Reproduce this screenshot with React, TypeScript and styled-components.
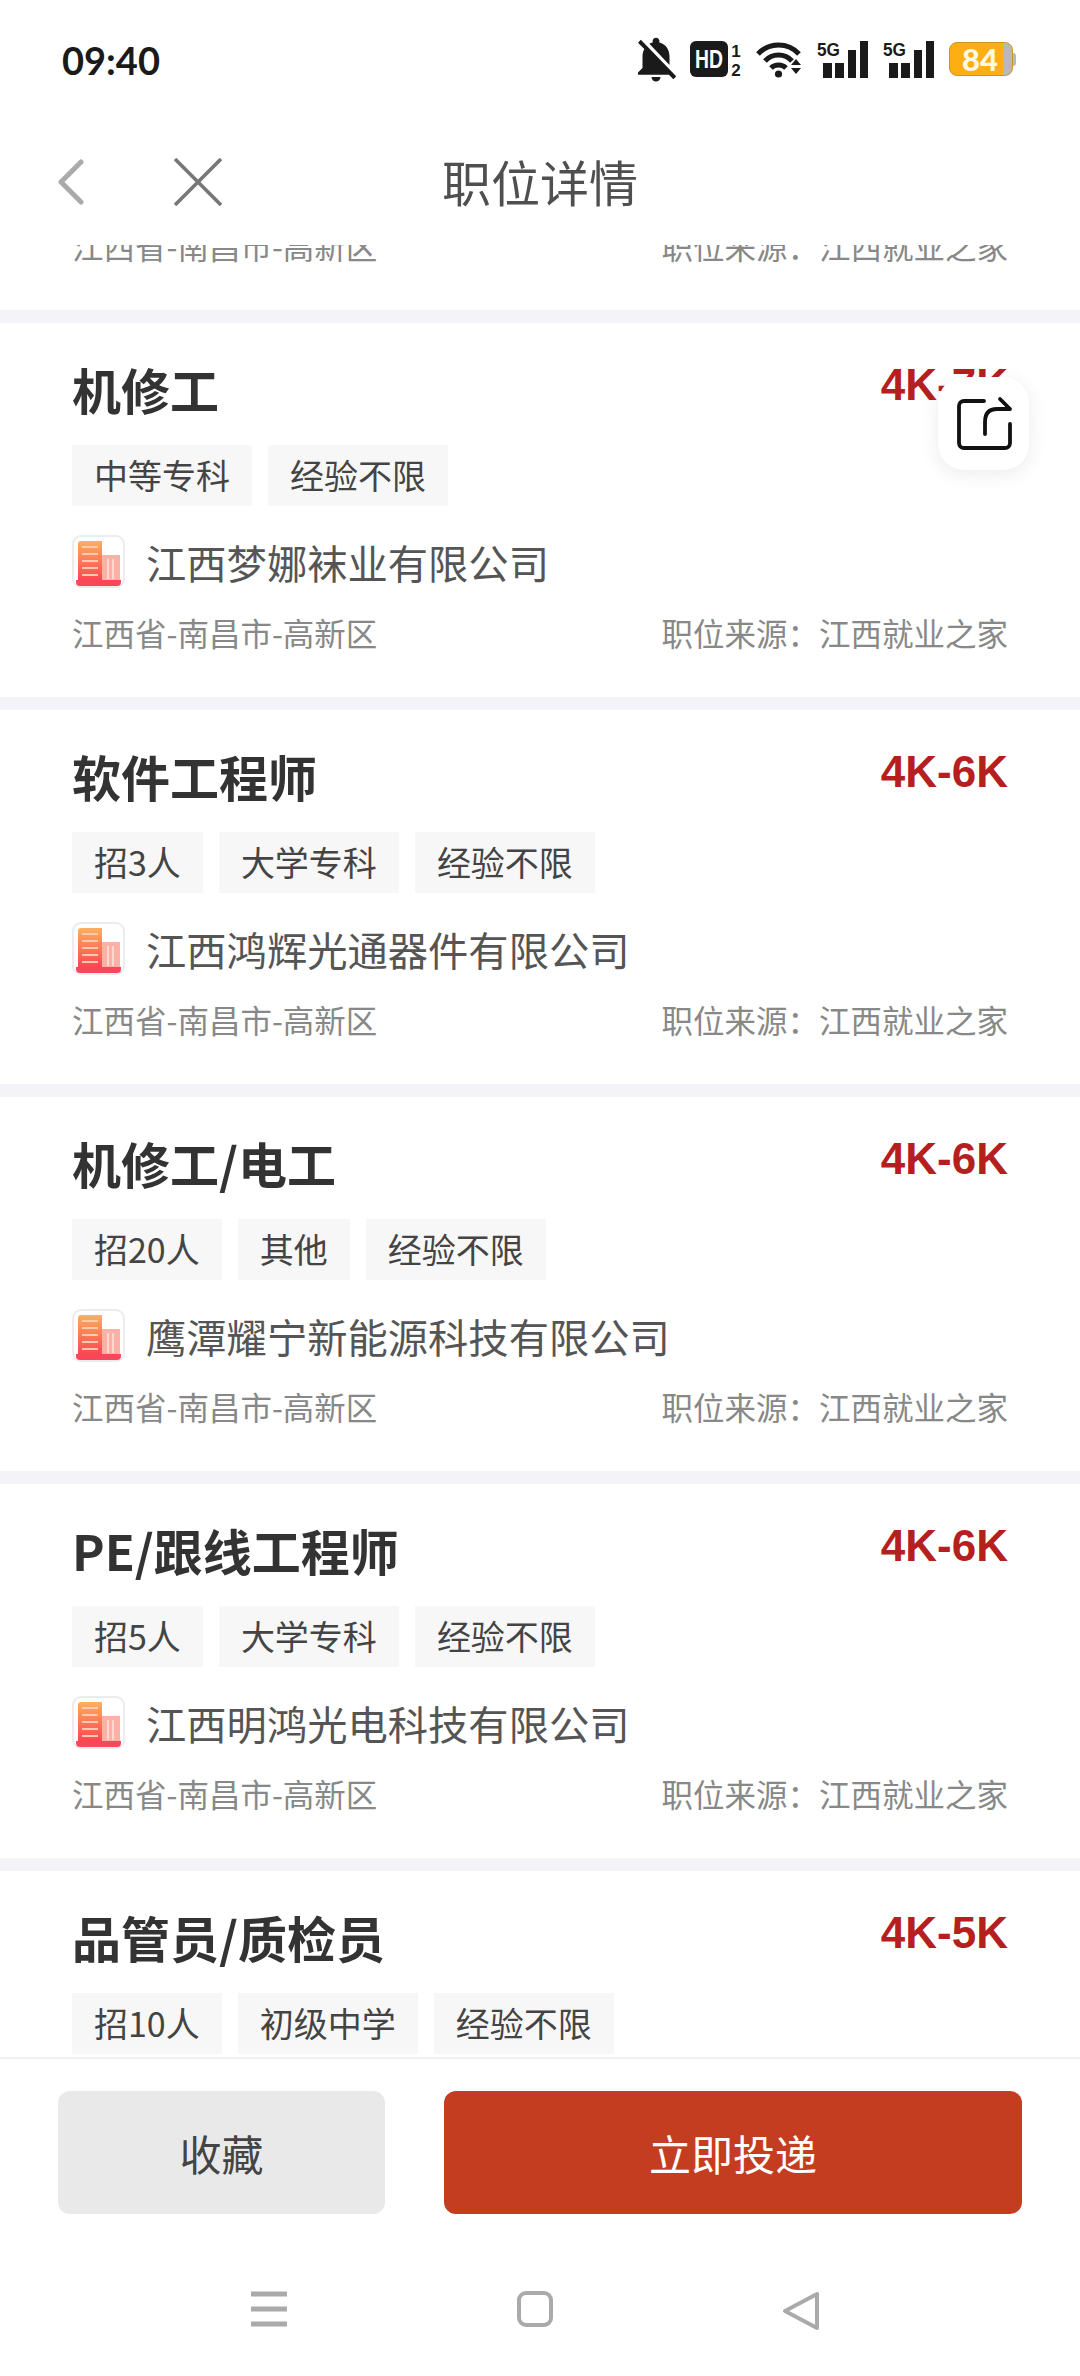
import React from 'react';
import styled, { createGlobalStyle } from 'styled-components';
import { MdNotificationsOff } from 'react-icons/md';

interface jobType {
  title: string;
  salary: string;
  tags: string[];
  company: string;
}

const jobs: jobType[] = [
  { title: '机修工', salary: '4K-7K', tags: ['中等专科', '经验不限'], company: '江西梦娜袜业有限公司' },
  { title: '软件工程师', salary: '4K-6K', tags: ['招3人', '大学专科', '经验不限'], company: '江西鸿辉光通器件有限公司' },
  { title: '机修工/电工', salary: '4K-6K', tags: ['招20人', '其他', '经验不限'], company: '鹰潭耀宁新能源科技有限公司' },
  { title: 'PE/跟线工程师', salary: '4K-6K', tags: ['招5人', '大学专科', '经验不限'], company: '江西明鸿光电科技有限公司' },
  { title: '品管员/质检员', salary: '4K-5K', tags: ['招10人', '初级中学', '经验不限'], company: '江西鸿辉光通器件有限公司' },
];

const Signal = () => (
  <svg width="51" height="37" viewBox="0 0 51 37">
    <text x="0" y="15" fontFamily="'Liberation Sans', sans-serif" fontWeight="700" fontSize="19" textLength="23" lengthAdjust="spacingAndGlyphs" fill="#1a1a1a">
      5G
    </text>
    <rect x="6" y="22" width="9" height="15" fill="#1a1a1a" />
    <rect x="18" y="22" width="9" height="15" fill="#1a1a1a" />
    <rect x="31" y="9" width="8" height="28" fill="#1a1a1a" />
    <rect x="43" y="0" width="8" height="37" fill="#1a1a1a" />
  </svg>
);

const Wifi = () => (
  <svg width="46" height="37" viewBox="0 0 46 37">
    <g fill="none" stroke="#1a1a1a" strokeWidth="5">
      <path d="M2 13 C13 1 32 1 43 13" />
      <path d="M9 20 C16 12 29 12 36 20" />
      <path d="M15 27 C19 23 26 23 30 27" />
    </g>
    <circle cx="22.5" cy="33" r="3.6" fill="#1a1a1a" />
    <path d="M35 24 L40 18 L45 24 Z M35 27 L45 27 L40 33 Z" fill="#1a1a1a" />
  </svg>
);

const HdBadge = () => (
  <svg width="51" height="36" viewBox="0 0 51 36">
    <rect width="38" height="36" rx="6" fill="#1a1a1a" />
    <text x="19" y="27" textAnchor="middle" fontFamily="'Liberation Sans', sans-serif" fontWeight="700" fontSize="26" textLength="28" lengthAdjust="spacingAndGlyphs" fill="#fff">
      HD
    </text>
    <text x="46" y="16" textAnchor="middle" fontFamily="'Liberation Sans', sans-serif" fontWeight="700" fontSize="17" fill="#1a1a1a">
      1
    </text>
    <text x="46" y="35" textAnchor="middle" fontFamily="'Liberation Sans', sans-serif" fontWeight="700" fontSize="17" fill="#1a1a1a">
      2
    </text>
  </svg>
);

const BuildingIcon = () => (
  <svg width="53" height="53" viewBox="0 0 53 53">
    <defs>
      <linearGradient id="tower" x1="0" y1="0" x2="0" y2="1">
        <stop offset="0" stopColor="#fbb060" />
        <stop offset="1" stopColor="#fb3f4f" />
      </linearGradient>
    </defs>
    <rect x="1" y="1" width="51" height="51" rx="8" fill="#fff" stroke="#ececec" strokeWidth="2" />
    <path d="M6 9 a3 3 0 0 1 3 -3 H30 V48 H6 Z" fill="url(#tower)" />
    <rect x="30" y="20" width="18" height="28" fill="#fcb0a6" />
    <path d="M4 45 H49 V47 a4 4 0 0 1 -4 4 H8 a4 4 0 0 1 -4 -4 Z" fill="#f8465a" />
    <g stroke="#ffc9b0" strokeWidth="2">
      <path d="M10 12 H26 M10 19 H26 M10 26 H26 M10 33 H26 M10 40 H26" />
    </g>
    <g stroke="#ffd8d0" strokeWidth="2">
      <path d="M36 24 V44 M41 24 V44" />
    </g>
  </svg>
);

const App = () => {
  return (
    <Page>
      <GlobalStyle />
      <StatusBar>
        <Clock>09:40</Clock>
        <StatusIcons>
          <BellWrap>
            <MdNotificationsOff size={54} color="#1a1a1a" style={{ flexShrink: 0 }} />
          </BellWrap>
          <HdBadge />
          <Wifi />
          <Signal />
          <Signal />
          <Battery>
            <BatteryText>84</BatteryText>
          </Battery>
        </StatusIcons>
      </StatusBar>

      <NavBar>
        <NavIcons>
          <svg width="26" height="46" viewBox="0 0 26 46">
            <path d="M23 3 L3 23 L23 43" fill="none" stroke="#aaaaaa" strokeWidth="5" strokeLinecap="round" strokeLinejoin="round" />
          </svg>
          <svg width="48" height="48" viewBox="0 0 48 48">
            <path d="M1 1 L47 47 M47 1 L1 47" fill="none" stroke="#777777" strokeWidth="3.6" />
          </svg>
        </NavIcons>
        <NavTitle>职位详情</NavTitle>
      </NavBar>

      <List>
        <PeekCard>
          <MetaRow>
            <span>江西省-南昌市-高新区</span>
            <span>职位来源：江西就业之家</span>
          </MetaRow>
        </PeekCard>
        {jobs.map((job) => (
          <Card key={job.title}>
            <TitleRow>
              <JobTitle>{job.title}</JobTitle>
              <Salary>{job.salary}</Salary>
            </TitleRow>
            <Tags>
              {job.tags.map((tag) => (
                <Tag key={tag}>{tag}</Tag>
              ))}
            </Tags>
            <CompanyRow>
              <BuildingIcon />
              <CompanyName>{job.company}</CompanyName>
            </CompanyRow>
            <MetaRow>
              <span>江西省-南昌市-高新区</span>
              <span>职位来源：江西就业之家</span>
            </MetaRow>
          </Card>
        ))}
        <ShareButton>
          <svg width="56" height="56" viewBox="0 0 56 56">
            <path
              d="M28 5 H8 a5 5 0 0 0 -5 5 V47 a5 5 0 0 0 5 5 H49 a5 5 0 0 0 5 -5 V28 M29 38 V26 C29 17 33 13 41 13 H54 L44 3"
              fill="none"
              stroke="#111111"
              strokeWidth="3.8"
              strokeLinecap="round"
              strokeLinejoin="round"
            />
          </svg>
        </ShareButton>
      </List>

      <ActionBar>
        <SaveButton>收藏</SaveButton>
        <ApplyButton>立即投递</ApplyButton>
      </ActionBar>

      <SystemNav>
        <svg width="36" height="36" viewBox="0 0 36 36">
          <path d="M0 3 H36 M0 18 H36 M0 33 H36" stroke="#aaaaaa" strokeWidth="5" />
        </svg>
        <svg width="36" height="36" viewBox="0 0 36 36">
          <rect x="2" y="2" width="32" height="32" rx="7" fill="none" stroke="#aaaaaa" strokeWidth="4" />
        </svg>
        <svg width="38" height="40" viewBox="0 0 38 40">
          <path d="M35 3 V37 L3 20 Z" fill="none" stroke="#aaaaaa" strokeWidth="4" strokeLinejoin="round" />
        </svg>
      </SystemNav>
    </Page>
  );
};

export default App;

const GlobalStyle = createGlobalStyle`
  html, body {
    margin: 0;
    padding: 0;
    background: #ffffff;
  }
  * {
    box-sizing: border-box;
  }
`;

const Page = styled.div`
  width: 1080px;
  height: 2376px;
  display: flex;
  flex-direction: column;
  overflow: hidden;
  background: #ffffff;
  font-family: 'Noto Sans CJK SC', 'Noto Sans', sans-serif;
`;

const StatusBar = styled.div`
  height: 120px;
  flex-shrink: 0;
  display: flex;
  justify-content: space-between;
  align-items: flex-start;
  padding: 40px 67px 0 62px;
`;

const Clock = styled.div`
  font-family: Lato, 'Open Sans', sans-serif;
  font-size: 38px;
  font-weight: 700;
  line-height: 40px;
  color: #1a1a1a;
`;

const StatusIcons = styled.div`
  display: flex;
  align-items: center;
  gap: 15px;
  height: 38px;
`;

const BellWrap = styled.div`
  width: 36px;
  height: 38px;
  display: flex;
  align-items: center;
  justify-content: center;
  margin-right: 1px;
`;

const Battery = styled.div`
  position: relative;
  width: 64px;
  height: 34px;
  border-radius: 8px;
  border: 1px solid #c7952a;
  background: linear-gradient(to right, #fcae12 86%, #b8b8b8 86%);
  display: flex;
  align-items: center;
  padding-left: 12px;
  &::after {
    content: '';
    position: absolute;
    right: -4px;
    top: 10px;
    width: 3px;
    height: 13px;
    border-radius: 0 3px 3px 0;
    background: #b8b8b8;
  }
`;

const BatteryText = styled.span`
  font-family: Lato, 'Open Sans', sans-serif;
  font-size: 31px;
  font-weight: 900;
  line-height: 32px;
  color: #fff8e6;
`;

const NavBar = styled.div`
  position: relative;
  height: 125px;
  flex-shrink: 0;
  display: flex;
  align-items: flex-start;
  justify-content: center;
`;

const NavIcons = styled.div`
  position: absolute;
  left: 58px;
  top: 38px;
  display: flex;
  align-items: center;
  gap: 90px;
`;

const NavTitle = styled.h1`
  margin: 31px 0 0;
  font-size: 49px;
  font-weight: 400;
  line-height: 60px;
  color: #4f4f4f;
`;

const List = styled.div`
  position: relative;
  flex: 1;
  min-height: 0;
  overflow: hidden;
  display: flex;
  flex-direction: column;
  gap: 13px;
  background: #f4f4f8;
`;

const Card = styled.div`
  flex-shrink: 0;
  height: 374px;
  padding: 32px 72px 0 72px;
  background: #ffffff;
`;

const PeekCard = styled.div`
  flex-shrink: 0;
  height: 65px;
  padding: 0 72px 43px 72px;
  background: #ffffff;
  overflow: hidden;
  display: flex;
  flex-direction: column;
  justify-content: flex-end;
`;

const TitleRow = styled.div`
  display: flex;
  justify-content: space-between;
  align-items: flex-start;
`;

const JobTitle = styled.h2`
  margin: 2px 0 0;
  font-size: 49px;
  font-weight: 700;
  line-height: 64px;
  color: #333333;
`;

const Salary = styled.div`
  font-family: 'Liberation Sans', Arial, sans-serif;
  font-size: 44px;
  font-weight: 700;
  line-height: 52px;
  margin-top: 4px;
  color: #b51f1f;
`;

const Tags = styled.div`
  display: flex;
  gap: 16px;
  margin-top: 24px;
`;

const Tag = styled.span`
  height: 61px;
  padding: 0 22px;
  background: #f7f7f7;
  font-size: 34px;
  line-height: 60px;
  color: #444444;
`;

const CompanyRow = styled.div`
  display: flex;
  align-items: center;
  gap: 21px;
  margin-top: 29px;
`;

const CompanyName = styled.span`
  font-size: 40.3px;
  line-height: 53px;
  color: #555555;
`;

const MetaRow = styled.div`
  display: flex;
  justify-content: space-between;
  margin-top: 22px;
  font-size: 31.5px;
  line-height: 44px;
  color: #888888;
  flex-shrink: 0;
`;

const ShareButton = styled.div`
  position: absolute;
  left: 938px;
  top: 132px;
  width: 91px;
  height: 93px;
  border-radius: 26px;
  background: #ffffff;
  box-shadow: 0 4px 18px rgba(60, 60, 80, 0.1);
  display: flex;
  align-items: center;
  justify-content: center;
`;

const ActionBar = styled.div`
  flex-shrink: 0;
  height: 194px;
  display: flex;
  gap: 59px;
  padding: 32px 58px 0;
  background: #ffffff;
  border-top: 2px solid #f0f0f0;
`;

const SaveButton = styled.button`
  width: 327px;
  height: 123px;
  border: 0;
  border-radius: 12px;
  background: #e9e9e9;
  font-family: inherit;
  font-size: 42px;
  color: #444444;
`;

const ApplyButton = styled.button`
  width: 578px;
  height: 123px;
  border: 0;
  border-radius: 12px;
  background: #c43d20;
  font-family: inherit;
  font-size: 42px;
  color: #ffffff;
`;

const SystemNav = styled.div`
  height: 125px;
  flex-shrink: 0;
  display: flex;
  align-items: flex-start;
  justify-content: space-between;
  padding: 40px 260px 0 251px;
  background: #ffffff;
`;
